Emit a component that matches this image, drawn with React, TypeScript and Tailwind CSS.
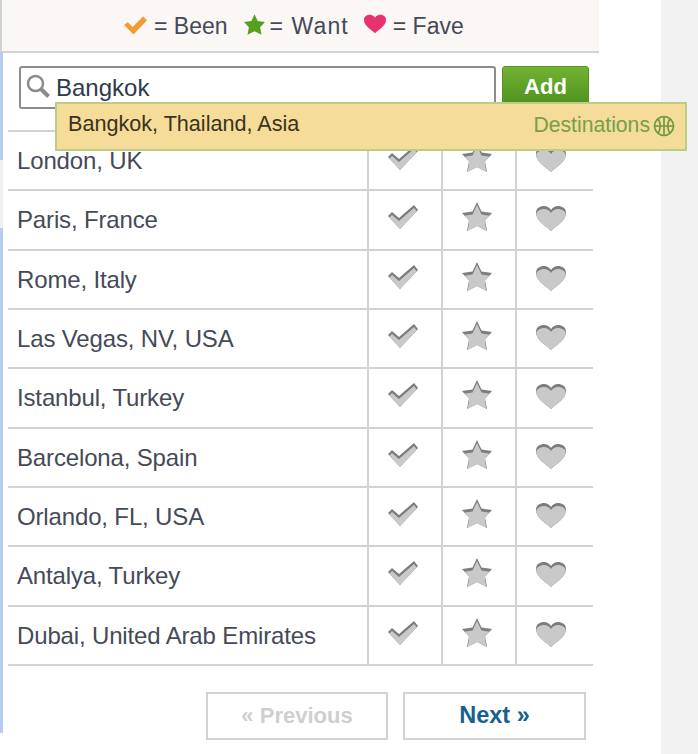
import { useId } from "react";

const places = [
  "London, UK",
  "Paris, France",
  "Rome, Italy",
  "Las Vegas, NV, USA",
  "Istanbul, Turkey",
  "Barcelona, Spain",
  "Orlando, FL, USA",
  "Antalya, Turkey",
  "Dubai, United Arab Emirates",
];

const CHECK = "M0 11 L4 7 L11 13 L26 0 L30 5 L12 24 Z";
const STAR = "M15 0 L19.5 9.5 L30 11 L23 18.5 L25 29 L15 24 L5 29 L7 18.5 L0 11 L10.5 9.5 Z";
const HEART = "M15 25 C10 20 0 15 0 7 C0 2 4 0 8 0 C11 0 14 2 15 4 C16 2 19 0 22 0 C26 0 30 2 30 7 C30 15 20 20 15 25 Z";

function Inset({ d, className, viewBox }: { d: string; className: string; viewBox: string }) {
  const id = useId();
  return (
    <svg viewBox={viewBox} className={className}>
      <clipPath id={id}>
        <path d={d} />
      </clipPath>
      <path d={d} fill="#7d7d7d" />
      <g clipPath={`url(#${id})`}>
        <path d={d} fill="#c9c9c9" transform="translate(0 3)" />
      </g>
    </svg>
  );
}

function Row({ name }: { name: string }) {
  return (
    <div className="flex h-[59.33px] border-b-2 border-[#d2d2d2]">
      <div className="flex-1 pl-[9px] pt-[13px] text-[24px] leading-[32px] tracking-[-0.15px]">{name}</div>
      <div className="flex w-[74px] justify-center border-l-2 border-[#d2d2d2] pr-[4px] pt-[14px]">
        <Inset d={CHECK} viewBox="0 0 30 24" className="h-[24px] w-[30px]" />
      </div>
      <div className="flex w-[74px] justify-center border-l-2 border-[#d2d2d2] pr-[4px] pt-[11px]">
        <Inset d={STAR} viewBox="0 0 30 29" className="h-[29px] w-[30px]" />
      </div>
      <div className="flex w-[78px] justify-start border-l-2 border-[#d2d2d2] pl-[19px] pt-[15px]">
        <Inset d={HEART} viewBox="0 0 30 25" className="h-[25px] w-[30px]" />
      </div>
    </div>
  );
}

export default function App() {
  return (
    <div className="flex h-[754px] w-[698px] overflow-hidden bg-[#f2f2f2] font-['Liberation_Sans',sans-serif] text-[#454a58]">
      <div className="relative w-[661px] bg-white">
        <div className="absolute left-0 top-[52px] h-[108px] w-[3px] bg-[#b4cdf0]" />
        <div className="absolute left-0 top-[160px] h-[68px] w-[3px] bg-[#eef0f4]" />
        <div className="absolute left-0 top-[228px] h-[505px] w-[3px] bg-[#b4cdf0]" />
        <div className="flex h-[53px] w-[599px] items-center border-b-2 border-l-2 border-[#d2d2d2] bg-[#faf7f4] pl-[122px] pt-[2px] text-[23px]">
          <svg viewBox="0 0 24 19" className="mb-[2px] h-[19px] w-[23px]">
            <path d="M0 9 L4 6 L9 11 L20 0 L24 4 L10 19 Z" fill="#f39a33" />
          </svg>
          <span className="ml-[7px]">= Been</span>
          <svg viewBox="0 0 30 29" className="mb-[5px] ml-[16px] h-[21px] w-[21px]">
            <path d={STAR} fill="#55a11d" />
          </svg>
          <span className="ml-[5px] tracking-[1.1px]">= Want</span>
          <svg viewBox="0 0 30 25" className="mb-[5px] ml-[15px] h-[20px] w-[22px]">
            <path d={HEART} fill="#e8316f" />
          </svg>
          <span className="ml-[7px]">= Fave</span>
        </div>

        <div className="flex gap-[6px] pl-[19px] pt-[13px]">
          <div className="flex h-[43px] w-[477px] items-center gap-[6px] rounded-[3px] border-2 border-[#8c8c8c] pl-[5px]">
            <svg viewBox="0 0 24 24" className="mb-[3px] h-[24px] w-[24px] shrink-0" fill="none" stroke="#8a8a8a">
              <circle cx="9.5" cy="9.5" r="7.5" strokeWidth="2.5" />
              <path d="M15 15 L22.5 22.5" strokeWidth="4" />
            </svg>
            <span className="text-[24px] text-[#2f3a4d]">Bangkok</span>
          </div>
          <div className="flex h-[43px] w-[87px] items-center justify-center rounded-[3px] border border-[#5a8f2a] bg-gradient-to-b from-[#72b332] to-[#4c8f1e] pb-[3px] text-[22px] font-bold text-white">
            Add
          </div>
        </div>

        <div className="ml-[8px] mt-[21px] w-[585px] border-t-2 border-[#d2d2d2]">
          {places.map((p) => (
            <Row key={p} name={p} />
          ))}
        </div>

        <div className="flex justify-end gap-[15px] pr-[75px] pt-[26px]">
          <div className="flex h-[48px] w-[182px] items-center justify-center border-2 border-[#d2d2d2] text-[22px] font-bold text-[#cfcfcf]">
            « Previous
          </div>
          <div className="flex h-[48px] w-[183px] items-center justify-center border-2 border-[#d2d2d2] text-[23.5px] font-bold text-[#175f8f]">
            Next »
          </div>
        </div>

        <div className="absolute left-[55px] top-[102px] flex h-[49px] w-[632px] items-center justify-between border-2 border-[#bccb86] bg-[#f5dc98] pb-[4px] pl-[11px] pr-[10px] text-[21.6px]">
          <span className="text-[#3a3320]">Bangkok, Thailand, Asia</span>
          <span className="flex items-center gap-[3px] text-[21.2px] text-[#76a04a]">
            Destinations
            <svg viewBox="0 0 22 22" className="mt-[4px] h-[22px] w-[22px]" fill="none" stroke="#6e9a3f" strokeWidth="1.7">
              <circle cx="11" cy="11" r="9.5" />
              <path d="M11 1.5 V20.5 M1.5 11 H20.5 M5 3.5 Q9.5 11 5 18.5 M17 3.5 Q12.5 11 17 18.5" />
            </svg>
          </span>
        </div>
      </div>
    </div>
  );
}
